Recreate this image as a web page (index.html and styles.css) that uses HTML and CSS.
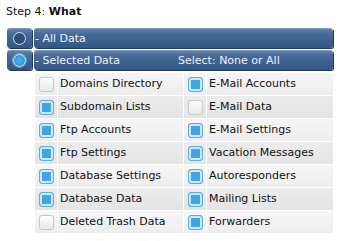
FILE: index.html
```html
<!DOCTYPE html>
<html>
<head>
<meta charset="utf-8">
<link rel="stylesheet" href="styles.css">
</head>
<body>
<div class="title">Step 4: <b>What</b></div>
<div class="bars">
  <div class="bar-row">
    <div class="radio-box"><span class="radio"></span></div>
    <div class="bar">- All Data</div>
  </div>
  <div class="bar-row">
    <div class="radio-box"><span class="radio on"></span></div>
    <div class="bar"><span class="bar-label">- Selected Data</span><span class="bar-select">Select: None or All</span></div>
  </div>
</div>
<div class="grid">
  <div class="row odd">
    <div class="cc"><span class="cb"></span></div><div class="lbl">Domains Directory</div>
    <div class="cc"><span class="cb on"></span></div><div class="lbl">E-Mail Accounts</div>
  </div>
  <div class="row even">
    <div class="cc"><span class="cb on"></span></div><div class="lbl">Subdomain Lists</div>
    <div class="cc"><span class="cb"></span></div><div class="lbl">E-Mail Data</div>
  </div>
  <div class="row odd">
    <div class="cc"><span class="cb on"></span></div><div class="lbl">Ftp Accounts</div>
    <div class="cc"><span class="cb on"></span></div><div class="lbl">E-Mail Settings</div>
  </div>
  <div class="row even">
    <div class="cc"><span class="cb on"></span></div><div class="lbl">Ftp Settings</div>
    <div class="cc"><span class="cb on"></span></div><div class="lbl">Vacation Messages</div>
  </div>
  <div class="row odd">
    <div class="cc"><span class="cb on"></span></div><div class="lbl">Database Settings</div>
    <div class="cc"><span class="cb on"></span></div><div class="lbl">Autoresponders</div>
  </div>
  <div class="row even">
    <div class="cc"><span class="cb on"></span></div><div class="lbl">Database Data</div>
    <div class="cc"><span class="cb on"></span></div><div class="lbl">Mailing Lists</div>
  </div>
  <div class="row odd">
    <div class="cc"><span class="cb"></span></div><div class="lbl">Deleted Trash Data</div>
    <div class="cc"><span class="cb on"></span></div><div class="lbl">Forwarders</div>
  </div>
</div>
</body>
</html>
```
FILE: styles.css
```css
html, body {
  margin: 0;
  padding: 0;
  background: #ffffff;
}
body {
  font-family: "DejaVu Sans", Verdana, sans-serif;
  font-size: 11px;
  color: #111;
}
.title {
  padding: 5px 0 0 6px;
  height: 28px;
  box-sizing: border-box;
  line-height: 14px;
}
.bars {
  margin-left: 7px;
  width: 326px;
  display: flex;
  flex-direction: column;
  gap: 2px;
}
.bar-row {
  display: flex;
  gap: 2px;
  height: 20px;
}
.radio-box, .bar {
  background: linear-gradient(to bottom, #6385ad 0%, #466b97 30%, #3d6390 60%, #325580 100%);
  border-radius: 3px;
  box-shadow: 1px 1px 0 #22395a, inset 0 1px 0 rgba(255,255,255,0.2);
}
.radio-box {
  width: 25px;
  display: flex;
  align-items: center;
  justify-content: center;
}
.radio {
  width: 11px;
  height: 11px;
  border-radius: 50%;
  border: 1.5px solid #d9e2ec;
  background: rgba(20,40,70,0.35);
}
.radio.on {
  background: radial-gradient(circle, #46b4f4 0%, #2d9be0 70%, #2a8fd2 100%);
  box-shadow: 0 0 0 1px rgba(255,255,255,0.3);
}
.bar {
  flex: 1;
  color: #eef2f7;
  line-height: 21px;
  padding-left: 1px;
  display: flex;
}
.bar-label {
  width: 143px;
}
.grid {
  margin: 3px 0 0 35px;
  width: 298px;
  display: flex;
  flex-direction: column;
}
.row {
  display: flex;
  height: 23px;
  border-bottom: 1px solid #ffffff;
  box-sizing: border-box;
}
.row.odd {
  background: linear-gradient(to bottom, #f6f6f6, #ededed);
}
.row.even {
  background: linear-gradient(to bottom, #ececec, #e4e4e4);
}
.cc {
  width: 23px;
  border-right: 1px solid #ffffff;
  box-sizing: border-box;
  display: flex;
  align-items: center;
  padding-left: 4px;
}
.lbl {
  width: 126px;
  line-height: 22px;
  padding-left: 2px;
  box-sizing: border-box;
  border-right: 1px solid #ffffff;
}
.lbl:last-child {
  border-right: none;
}
.cb {
  width: 15px;
  height: 15px;
  box-sizing: border-box;
  border-radius: 3px;
  border: 1px solid #c9c9c9;
  background: linear-gradient(to bottom, #fdfdfd, #e9e9e9);
}
.cb.on {
  border: 1px solid #5aaee0;
  background: #3fa6e6;
  box-shadow: inset 0 0 0 2px #cfe8f8;
}
```
